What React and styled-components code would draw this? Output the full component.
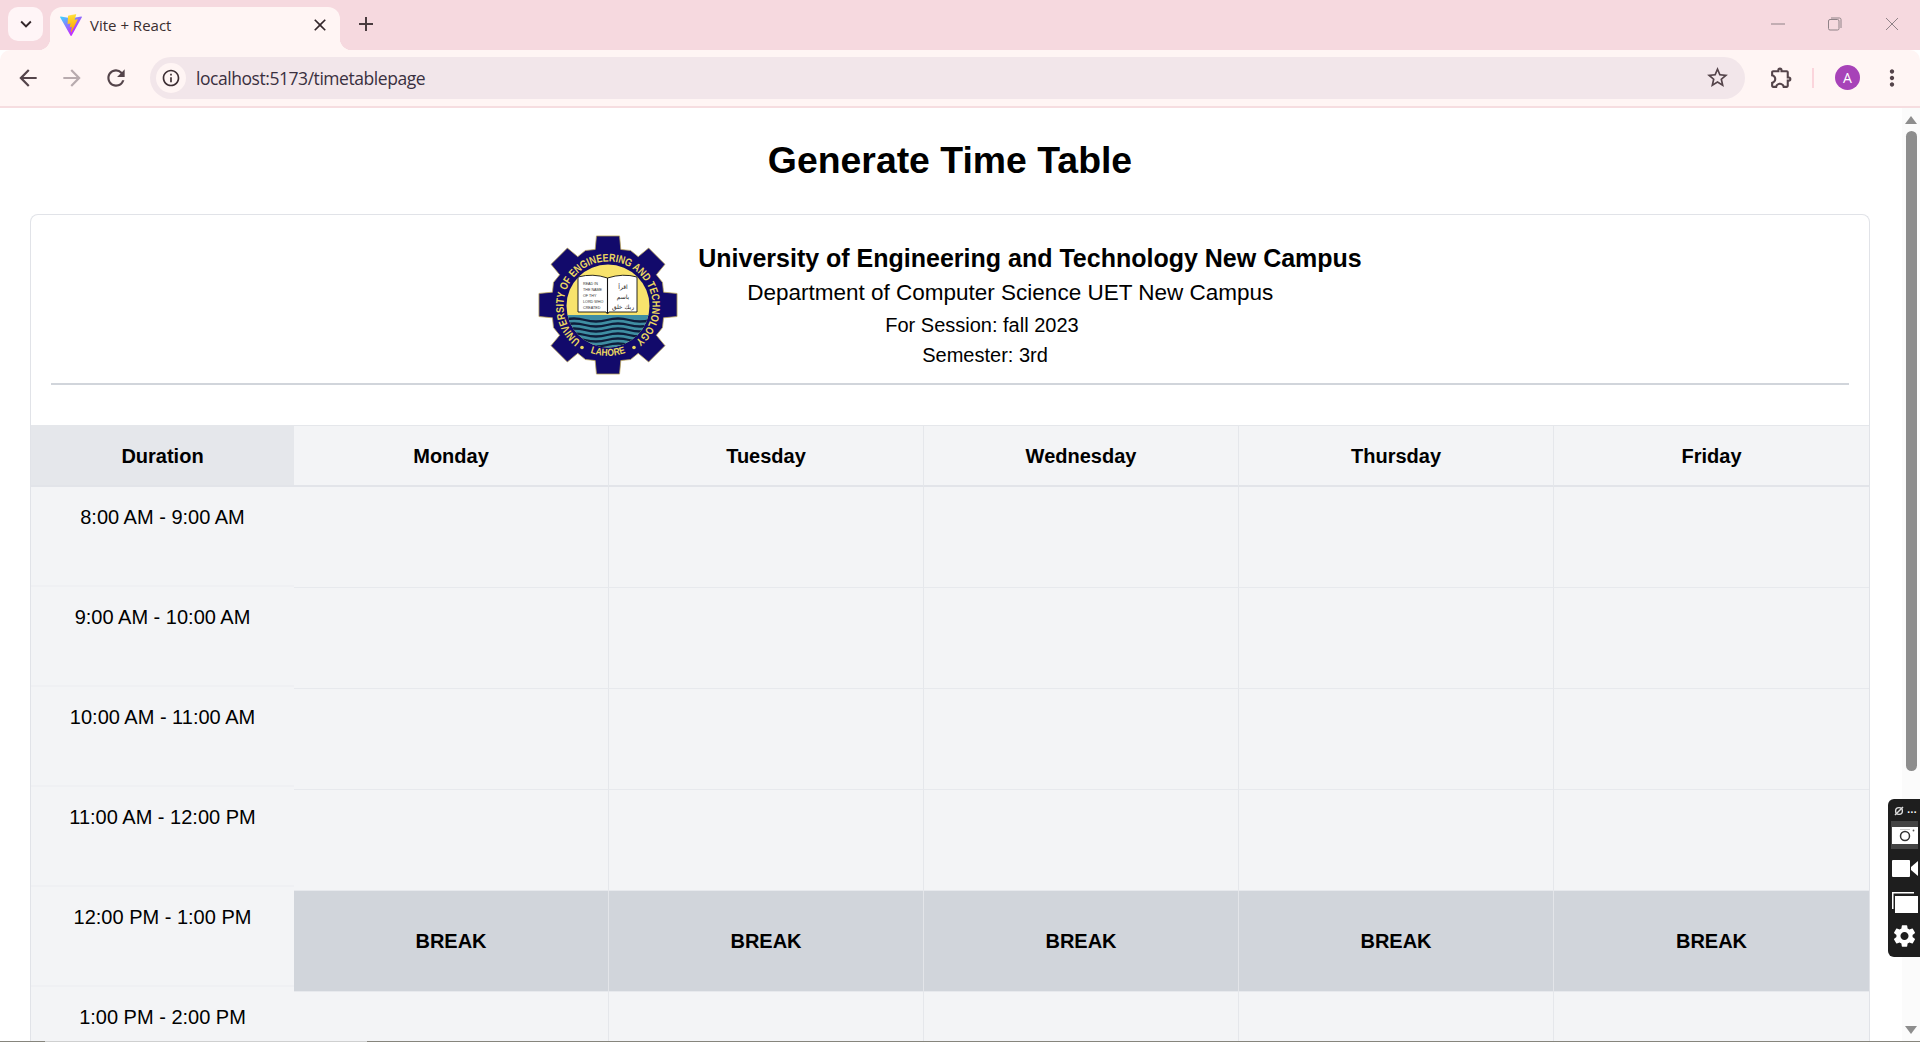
import React from "react";
import styled, { createGlobalStyle } from "styled-components";
import {
  MdAdd, MdArrowBack, MdArrowForward, MdClose, MdExpandMore, MdInfoOutline, MdMoreVert,
  MdOutlineExtension, MdRefresh, MdSettings, MdStarBorder,
} from "react-icons/md";

const Global = createGlobalStyle`
  html, body { margin: 0; padding: 0; height: 100%; overflow: hidden; background: #fff; }
  * { box-sizing: border-box; }
  body { font-family: "Liberation Sans", Arial, sans-serif; color: #000; }
`;

const Viewport = styled.div`
  position: relative; height: 100vh; display: flex; flex-direction: column; overflow: hidden;
`;
const TabStrip = styled.div`
  height: 50px; flex: none; background: #f6d9df; display: flex; align-items: flex-start;
  padding: 7px 0 0 8px; color: #33262a;
`;
const TabListButton = styled.div`
  width: 35px; height: 34px; border-radius: 10px; background: #fff5f7;
  display: flex; align-items: center; justify-content: center; font-size: 22px;
`;
const Tab = styled.div`
  position: relative; width: 290px; height: 43px; margin-left: 7px; background: #fff5f4;
  border-radius: 12px 12px 0 0; display: flex; align-items: center; padding: 0 10px 8px 10px;
  &::before, &::after { content: ""; position: absolute; bottom: 0; width: 12px; height: 12px; }
  &::before { left: -12px; background: radial-gradient(circle at 0 0, transparent 12px, #fff5f4 12.5px); }
  &::after { right: -12px; background: radial-gradient(circle at 100% 0, transparent 12px, #fff5f4 12.5px); }
`;
const TabTitle = styled.span`
  font: 15px "Open Sans", sans-serif; margin-left: 8px; flex: 1; color: #3a2d30;
`;
const NewTab = styled.div`
  width: 32px; height: 32px; margin: 1px 0 0 10px; display: flex; align-items: center;
  justify-content: center; font-size: 24px; color: #4a3b3f;
`;
const WindowControls = styled.div`
  margin-left: auto; display: flex; align-items: center; height: 40px; margin-top: -3px; color: #8f8287;
`;
const WindowButton = styled.div`
  width: 57px; height: 32px; display: flex; align-items: center; justify-content: center;
`;
const Toolbar = styled.div`
  height: 58px; flex: none; background: #fff5f4; border-bottom: 2px solid #f6dde0;
  border-radius: 10px 10px 0 0; display: flex; align-items: center; padding: 0 6px 1px;
  color: #54444a;
`;
const ToolButton = styled.div`
  width: 44px; height: 40px; flex: none; display: flex; align-items: center; justify-content: center;
  font-size: ${(p) => p.$size || 26}px; color: ${(p) => (p.$muted ? "#b8abae" : "#54444a")};
  margin-left: ${(p) => p.$ml || 0}px;
`;
const Omnibox = styled.div`
  flex: 1; height: 42px; margin-left: 12px; border-radius: 21px; background: #f2e6ea;
  display: flex; align-items: center; padding: 0 6px;
`;
const InfoBadge = styled.div`
  width: 30px; height: 30px; border-radius: 50%; background: #fff5f4; display: flex;
  align-items: center; justify-content: center; font-size: 20px; color: #3d2e33;
`;
const Url = styled.span`
  font: 17.5px "Open Sans", sans-serif; margin-left: 10px; flex: 1; color: #3a3040; letter-spacing: -0.45px;
`;
const ToolbarDivider = styled.div`
  width: 2px; height: 20px; margin-left: 10px; background: #fbd5dc; flex: none;
`;
const Avatar = styled.div`
  width: 25px; height: 25px; border-radius: 50%; margin-left: 21px; background: #a742b8; color: #fff;
  flex: none; display: flex; align-items: center; justify-content: center; font: 14px "Open Sans", sans-serif;
`;
const Body = styled.div`
  flex: 1; min-height: 0; display: flex;
`;
const Page = styled.main`
  flex: 1; min-width: 0; overflow: hidden; padding: 33px 32px 0 30px;
`;
const Title = styled.h1`
  margin: 0 0 33px; font-size: 37.4px; line-height: 38px; font-weight: 700; text-align: center;
  padding-bottom: 2px;
`;
const Card = styled.section`
  border: 1px solid #e1e3e8; border-bottom: 0; border-radius: 8px 8px 0 0; background: #fff;
`;
const CardHead = styled.div`
  padding: 20px 20px 0;
`;
const Letterhead = styled.div`
  display: flex; justify-content: center; gap: 20px; margin-bottom: 8px;
`;
const Details = styled.div`
  display: flex; flex-direction: column; padding-top: 5.5px;
`;
const DetailLine = styled.div`
  font-size: ${(p) => p.$size}px; font-weight: ${(p) => (p.$bold ? 700 : 400)};
  line-height: ${(p) => p.$lh}px; padding-left: ${(p) => p.$indent || 0}px; white-space: nowrap;
`;
const Rule = styled.hr`
  margin: 0 0 40px; border: 0; height: 2px; background: #d1d5db;
`;
const HeaderRow = styled.div`
  display: grid; grid-template-columns: 263px repeat(5, 1fr); border-top: 1px solid #e5e7eb;
`;
const HeaderCell = styled.div`
  height: 61px; padding-top: 16px; font-size: 20px; line-height: 28px; font-weight: 700; text-align: center;
  background: ${(p) => (p.$first ? "#e5e7eb" : "#f3f4f6")};
  border-bottom: 2px solid #e2e4e9; border-right: ${(p) => (p.$first || p.$last ? 0 : "1px solid #e5e7eb")};
`;
const TableBody = styled.div`
  display: flex; background: #f3f4f6;
`;
const DurationColumn = styled.div`
  width: 263px; flex: none;
`;
const DurationCell = styled.div`
  height: 100px; padding-top: 16px; font-size: 20px; line-height: 28px; text-align: center;
  border-bottom: 2px solid #eff0f3;
`;
const DayGrid = styled.div`
  flex: 1; display: grid; grid-template-columns: repeat(5, 1fr); grid-auto-rows: 101px;
`;
const DayCell = styled.div`
  display: flex; align-items: center; justify-content: center; font-size: 20px; font-weight: 700;
  background: ${(p) => (p.$break ? "#d1d5db" : "#f3f4f6")};
  border-bottom: 1px solid #e7e9ed;
  border-right: ${(p) => (p.$last ? 0 : `1px solid ${p.$break ? "#e3e5e9" : "#e5e7eb"}`)};
`;
const ScrollTrack = styled.div`
  width: 18px; flex: none; background: #fbfbfb; display: flex; flex-direction: column; align-items: center;
  padding: 8px 0 7px;
`;
const ScrollArrow = styled.div`
  width: 0; height: 0; border-left: 6.5px solid transparent; border-right: 6.5px solid transparent;
  ${(p) => (p.$down ? "border-top: 8px solid #8d8d8d; margin-top: auto;" : "border-bottom: 8px solid #8d8d8d;")}
`;
const ScrollThumb = styled.div`
  width: 11px; height: 640px; margin-top: 7px; background: #8d8d8d; border-radius: 6px;
`;
const BottomStrip = styled.div`
  height: 1px; flex: none; display: flex; background: #86857d;
`;
const StripGap = styled.div`
  width: 322px; margin-left: 45px; background: #cfd0d0;
`;
const CaptureWidget = styled.aside`
  position: absolute; right: 0; top: 799px; width: 32px; height: 158px; background: #1e1e1e;
  border-radius: 6px 0 0 6px; display: flex; flex-direction: column; align-items: stretch; color: #fff;
  padding: 2px 2px 0 3px;
`;
const WidgetTop = styled.div`
  height: 20px; display: flex; align-items: center; justify-content: space-between; padding: 0 1px 0 3px;
`;
const WidgetDots = styled.span`
  font: 700 10px/10px "Liberation Sans", sans-serif; letter-spacing: 0.5px; margin-top: -3px;
`;
const WidgetActive = styled.div`
  height: 28px; margin-bottom: 2px; background: #444; display: flex; align-items: center; justify-content: center;
`;
const WidgetItem = styled.div`
  height: 34px; display: flex; align-items: center; justify-content: center; font-size: ${(p) => p.$fs || 30}px;
`;

function ViteIcon() {
  return (
    <svg width="22" height="22" viewBox="0 0 256 257">
      <defs>
        <linearGradient id="viteA" x1="-.8%" x2="57.6%" y1="7.7%" y2="78.4%">
          <stop offset="0" stopColor="#41d1ff" /><stop offset="1" stopColor="#bd34fe" />
        </linearGradient>
        <linearGradient id="viteB" x1="43.4%" x2="50.3%" y1="2.2%" y2="89%">
          <stop offset="0" stopColor="#ffea83" /><stop offset=".08" stopColor="#ffdd35" /><stop offset="1" stopColor="#ffa800" />
        </linearGradient>
      </defs>
      <path fill="url(#viteA)" d="M255.153 37.938 134.897 252.976c-2.483 4.44-8.862 4.466-11.382.048L.875 37.958c-2.746-4.814 1.371-10.646 6.827-9.67l120.385 21.517a6.537 6.537 0 0 0 2.322-.004l117.867-21.483c5.438-.991 9.574 4.796 6.877 9.62Z" />
      <path fill="url(#viteB)" d="M185.432.063 96.44 17.501a3.268 3.268 0 0 0-2.634 3.014l-5.474 92.456a3.268 3.268 0 0 0 3.997 3.378l24.777-5.718c2.318-.535 4.413 1.507 3.936 3.838l-7.361 36.047c-.495 2.426 1.782 4.5 4.151 3.78l15.304-4.649c2.372-.72 4.652 1.36 4.15 3.788l-11.698 56.621c-.732 3.542 3.979 5.473 5.943 2.437l1.313-2.028 72.516-144.72c1.215-2.423-.88-5.186-3.54-4.672l-25.505 4.922c-2.396.462-4.435-1.77-3.759-4.114l16.646-57.705c.677-2.35-1.37-4.583-3.769-4.113Z" />
    </svg>
  );
}

function gearPoints() {
  const pts = [];
  const pol = (r, deg) => {
    const a = ((deg - 90) * Math.PI) / 180;
    return `${(70 + r * Math.cos(a)).toFixed(2)},${(70 + r * Math.sin(a)).toFixed(2)}`;
  };
  for (let i = 0; i < 8; i++) {
    const c = i * 45;
    pts.push(pol(57, c - 13), pol(70, c - 9.5), pol(70, c + 9.5), pol(57, c + 13), pol(59, c + 22.5));
  }
  return pts.join(" ");
}

function UetLogo() {
  const waves = [85, 90, 95, 100, 105, 110];
  return (
    <svg width="140" height="140" viewBox="0 0 140 140" style={{ flex: "none", display: "block" }}>
      <defs>
        <clipPath id="uetInner"><circle cx="70" cy="71" r="41.5" /></clipPath>
        <path id="uetTop" d="M 42.6 106 A 44.5 44.5 0 1 1 97.4 106" />
        <path id="uetBottom" d="M 34 106 A 51 51 0 0 0 106 106" />
      </defs>
      <polygon points={gearPoints()} fill="#120a6b" stroke="#b9a45c" strokeWidth="0.8" />
      <g clipPath="url(#uetInner)">
        <rect x="20" y="20" width="100" height="100" fill="#f8e36c" />
        <rect x="20" y="80" width="100" height="40" fill="#3f8ea3" />
        {waves.map((y) => (
          <path key={y} d={`M25 ${y} q 11 -3 22 0 t 22 0 t 22 0 t 22 0`} fill="none" stroke="#0e1c3a" strokeWidth="2.3" />
        ))}
      </g>
      <path d="M40 42 Q55 38 69.5 43 Q85 38 99 42 L99 77 L71 77 L69.5 79 L68 77 L40 77 Z" fill="#fff" stroke="#111" strokeWidth="0.9" />
      <path d="M69.5 43 V78" stroke="#111" strokeWidth="1.1" />
      <g fontFamily="Liberation Sans, sans-serif" fontSize="3.7" fill="#333">
        <text x="45" y="50">READ IN</text>
        <text x="45" y="56">THE NAME</text>
        <text x="45" y="62">OF THY</text>
        <text x="45" y="68">LORD WHO</text>
        <text x="45" y="74">CREATED</text>
      </g>
      <g fontFamily="DejaVu Sans, sans-serif" fontSize="6" fill="#222" textAnchor="middle" direction="rtl">
        <text x="85" y="54">اقرأ</text>
        <text x="85" y="64">باسم</text>
        <text x="85" y="74">ربك خلق</text>
      </g>
      <g fontFamily="Liberation Sans, sans-serif" fontWeight="700" fill="#ecd85f">
        <text fontSize="11">
          <textPath href="#uetTop" textLength="220" lengthAdjust="spacingAndGlyphs">UNIVERSITY OF ENGINEERING AND TECHNOLOGY</textPath>
        </text>
        <text fontSize="10" textAnchor="middle">
          <textPath href="#uetBottom" startOffset="50%" textLength="36" lengthAdjust="spacingAndGlyphs">LAHORE</textPath>
        </text>
      </g>
      <circle cx="44" cy="112.5" r="1.8" fill="#ecd85f" />
      <circle cx="96" cy="112.5" r="1.8" fill="#ecd85f" />
    </svg>
  );
}

const DAYS = ["Monday", "Tuesday", "Wednesday", "Thursday", "Friday"];
const SLOTS = [
  "8:00 AM - 9:00 AM", "9:00 AM - 10:00 AM", "10:00 AM - 11:00 AM",
  "11:00 AM - 12:00 PM", "12:00 PM - 1:00 PM", "1:00 PM - 2:00 PM",
];
const BREAK_INDEX = 4;

export default function App() {
  return (
    <Viewport>
      <Global />
      <TabStrip>
        <TabListButton><MdExpandMore /></TabListButton>
        <Tab>
          <ViteIcon />
          <TabTitle>Vite + React</TabTitle>
          <MdClose size={20} color="#33262a" />
        </Tab>
        <NewTab><MdAdd /></NewTab>
        <WindowControls>
          <WindowButton>
            <svg width="14" height="2"><path d="M0 1H14" stroke="currentColor" strokeWidth="1" /></svg>
          </WindowButton>
          <WindowButton>
            <svg width="14" height="14" fill="none" stroke="currentColor" strokeWidth="1">
              <rect x="0.5" y="2.5" width="10.5" height="10.5" rx="1.5" />
              <path d="M3 1 h8.5 a1.5 1.5 0 0 1 1.5 1.5 V11" />
            </svg>
          </WindowButton>
          <WindowButton>
            <svg width="14" height="14" stroke="currentColor" strokeWidth="1"><path d="M1 1L13 13M13 1L1 13" /></svg>
          </WindowButton>
        </WindowControls>
      </TabStrip>
      <Toolbar>
        <ToolButton><MdArrowBack /></ToolButton>
        <ToolButton $muted><MdArrowForward /></ToolButton>
        <ToolButton><MdRefresh /></ToolButton>
        <Omnibox>
          <InfoBadge><MdInfoOutline /></InfoBadge>
          <Url>localhost:5173/timetablepage</Url>
          <ToolButton $size={25}><MdStarBorder /></ToolButton>
        </Omnibox>
        <ToolButton $ml={13} $size={25}><MdOutlineExtension style={{ marginLeft: 3 }} /></ToolButton>
        <ToolbarDivider />
        <Avatar>A</Avatar>
        <ToolButton $ml={10} $size={26}><MdMoreVert /></ToolButton>
      </Toolbar>
      <Body>
        <Page>
          <Title>Generate Time Table</Title>
          <Card>
            <CardHead>
              <Letterhead>
                <UetLogo />
                <Details>
                  <DetailLine $size={25} $lh={34} $bold>University of Engineering and Technology New Campus</DetailLine>
                  <DetailLine $size={22.5} $lh={35} $indent={49}>Department of Computer Science UET New Campus</DetailLine>
                  <DetailLine $size={20} $lh={31} $indent={187}>For Session: fall 2023</DetailLine>
                  <DetailLine $size={20} $lh={29} $indent={224}>Semester: 3rd</DetailLine>
                </Details>
              </Letterhead>
              <Rule />
            </CardHead>
            <HeaderRow>
              <HeaderCell $first>Duration</HeaderCell>
              {DAYS.map((d, i) => (
                <HeaderCell key={d} $last={i === DAYS.length - 1}>{d}</HeaderCell>
              ))}
            </HeaderRow>
            <TableBody>
              <DurationColumn>
                {SLOTS.map((s) => <DurationCell key={s}>{s}</DurationCell>)}
              </DurationColumn>
              <DayGrid>
                {SLOTS.flatMap((s, r) =>
                  DAYS.map((d, c) => (
                    <DayCell key={s + d} $break={r === BREAK_INDEX} $last={c === DAYS.length - 1}>
                      {r === BREAK_INDEX ? "BREAK" : ""}
                    </DayCell>
                  ))
                )}
              </DayGrid>
            </TableBody>
          </Card>
        </Page>
        <ScrollTrack>
          <ScrollArrow />
          <ScrollThumb />
          <ScrollArrow $down />
        </ScrollTrack>
      </Body>
      <BottomStrip><StripGap /></BottomStrip>
      <CaptureWidget>
        <WidgetTop>
          <svg width="10" height="10" viewBox="0 0 10 10" fill="none" stroke="#ddd" strokeWidth="1.4">
            <circle cx="5" cy="5" r="3.4" />
            <path d="M1 9 L9 1" />
          </svg>
          <WidgetDots>...</WidgetDots>
        </WidgetTop>
        <WidgetActive>
          <svg width="26" height="17" viewBox="0 0 26 17">
            <path fill="#fff" d="M0 0H26V17H0Z" />
            <circle cx="13" cy="9" r="4.5" fill="none" stroke="#333" strokeWidth="1.5" />
            <circle cx="21.5" cy="3.5" r="0.9" fill="#555" />
            <path d="M8 2.5 H18" stroke="#ccc" strokeWidth="1" />
          </svg>
        </WidgetActive>
        <WidgetItem>
          <svg width="26" height="17" viewBox="0 0 26 17" fill="#fff">
            <rect width="18" height="17" rx="1" />
            <path d="M19 7 L26 1 V16 L19 10 Z" />
          </svg>
        </WidgetItem>
        <WidgetItem>
          <svg width="26" height="21" viewBox="0 0 26 21" fill="#fff">
            <path d="M0 3 V0 H22 V1.5 H1.5 V17 H0 Z" />
            <rect x="3" y="4" width="23" height="17" />
          </svg>
        </WidgetItem>
        <WidgetItem $fs={30}><MdSettings /></WidgetItem>
      </CaptureWidget>
    </Viewport>
  );
}
